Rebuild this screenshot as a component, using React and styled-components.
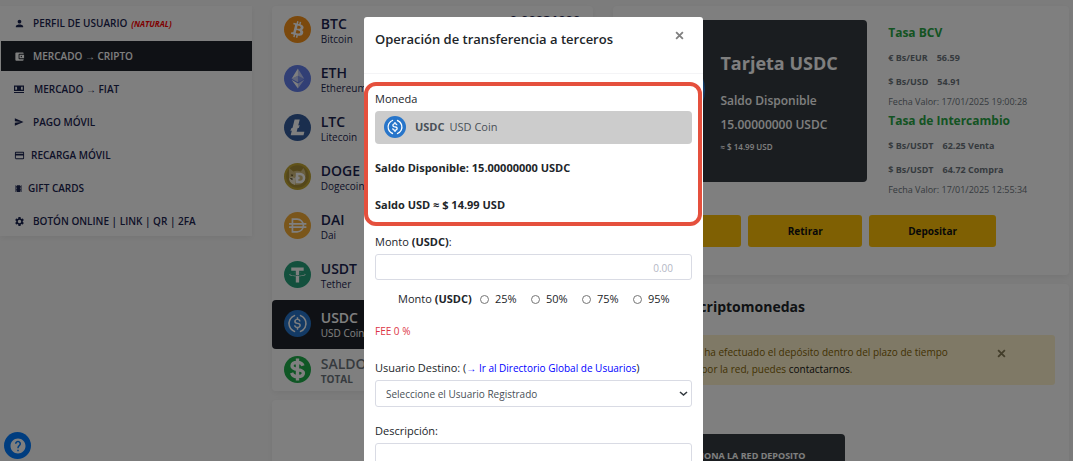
import React, { useState } from 'react';
import styled, { createGlobalStyle } from 'styled-components';
import {
  MdPerson,
  MdAccountBalanceWallet,
  MdSend,
  MdCreditCard,
  MdTheaters,
  MdSettings,
  MdHelp,
} from 'react-icons/md';

const GlobalStyle = createGlobalStyle`
  * {
    box-sizing: border-box;
  }

  body {
    margin: 0;
    background: #f9f9f9;
    color: #212529;
    font-family: "Open Sans", "Noto Sans", sans-serif;
    font-size: 11px;
    line-height: 16px;
    overflow: hidden;
  }

  button, input, select, textarea {
    font: inherit;
  }
`;

const Page = styled.div`
  display: grid;
  grid-template-columns: 252fr 322fr 456fr;
  gap: 20px;
  align-items: start;
  padding: 6px 4px 0 0;
`;

const Column = styled.div`
  display: flex;
  flex-direction: column;
  gap: 9px;
  min-width: 0;
`;

const Panel = styled.section`
  background: #fff;
  border-radius: 4px;
  box-shadow: 0 2px 6px rgba(0, 0, 0, 0.06);
`;

/* ---------- side menu ---------- */

const Menu = styled.nav`
  display: flex;
  flex-direction: column;
  gap: 3px;
  padding: 2px 0 0 1px;
  background: #fff;
  box-shadow: 0 2px 6px rgba(0, 0, 0, 0.06);
`;

const MenuLink = styled.a`
  display: flex;
  align-items: center;
  gap: ${(props) => props.$gap}px;
  height: 30px;
  padding-left: 13px;
  color: ${(props) => (props.$active ? '#fff' : '#1b2450')};
  background: ${(props) => (props.$active ? '#1f232b' : 'transparent')};
  font-size: 10px;
  font-weight: 600;
  text-decoration: none;
  white-space: nowrap;

  svg {
    flex: none;
  }
`;

const Tag = styled.em`
  margin-left: 4px;
  color: #f00;
  font-size: 8px;
  font-weight: 700;
`;

/* ---------- coin list ---------- */

const CoinRow = styled.a`
  display: flex;
  align-items: center;
  gap: 10px;
  height: ${(props) => (props.$total ? 42 : 49)}px;
  padding: 0 13px 2px 12px;
  border-radius: ${(props) => (props.$active ? 4 : 0)}px;
  background: ${(props) => (props.$active ? '#1f232b' : 'transparent')};
  color: ${(props) => (props.$active ? '#fff' : props.$total ? '#6c757d' : '#1b2450')};
  text-decoration: none;

  svg {
    flex: none;
  }
`;

const CoinText = styled.span`
  display: flex;
  flex: 1;
  flex-direction: column;
  padding-top: 2px;
  font-weight: ${(props) => (props.$total ? 700 : 400)};
  font-size: 10px;
  line-height: 14px;
`;

const CoinSymbol = styled.strong`
  font-size: 14px;
  font-weight: 600;
  line-height: 17px;
`;

const CoinAmount = styled.strong`
  align-self: flex-start;
  padding-top: 6px;
  font-size: 13px;
`;

/* ---------- card and rates ---------- */

const Summary = styled(Panel)`
  padding: 14px 16px 28px 14px;
`;

const SummaryTop = styled.div`
  display: grid;
  grid-template-columns: 240fr 186fr;
  align-items: start;
`;

const BalanceCard = styled.div`
  display: flex;
  gap: 15px;
  height: 162px;
  padding: 30px 6px 0;
  border-radius: 4px;
  background: #343a40;
  color: #fff;
  font-weight: 600;

  svg {
    flex: none;
    margin-top: 4px;
  }
`;

const CardTitle = styled.h2`
  margin: 0 0 13px;
  font-size: 18px;
  line-height: 26px;
`;

const CardLine = styled.p`
  margin: 0;
  font-size: 12px;
  line-height: 24px;
`;

const CardSmall = styled.p`
  margin: 2px 0 0;
  font-size: 8px;
  font-weight: 600;
`;

const Rates = styled.div`
  padding: 1px 0 0 21px;
`;

const RateTitle = styled.h3`
  margin: 0 0 1px;
  color: #28a745;
  font-size: 12px;
  font-weight: 700;
  line-height: 24px;
`;

const RateLine = styled.p`
  display: flex;
  gap: 9px;
  margin: 0;
  color: #6c757d;
  font-size: 9px;
  font-weight: 700;
  line-height: 24px;
`;

const RateDate = styled.p`
  margin: 0;
  color: #6c757d;
  font-size: 9px;
  line-height: 15px;
`;

const Actions = styled.div`
  display: grid;
  grid-template-columns: 114fr 114fr 127fr 50fr;
  gap: 7px;
  margin-top: 18px;
`;

const ActionButton = styled.button`
  height: 32px;
  border: 0;
  border-radius: 3px;
  background: #ffc107;
  color: #111;
  font-size: 10px;
  font-weight: 700;
`;

const DepositPanel = styled(Panel)`
  padding: 12px 14px 40px;
`;

const HistoryPanel = styled(Panel)`
  min-height: 120px;
`;

const DepositTitle = styled.h2`
  margin: 0 0 17px;
  font-size: 14px;
  font-weight: 700;
  line-height: 22px;
`;

const Alert = styled.div`
  display: flex;
  justify-content: space-between;
  height: 50px;
  padding: 9px 49px 0 18px;
  border-radius: 3px;
  background: #fff3cd;
  color: #856404;
  font-size: 10px;
  line-height: 17px;
  white-space: nowrap;

  p {
    margin: 0;
  }

  a {
    color: #111;
    text-decoration: none;
  }

  button {
    margin-top: 5px;
  }
`;

const CloseButton = styled.button`
  display: block;
  align-self: flex-start;
  padding: 0;
  border: 0;
  background: none;
  color: ${(props) => props.$color};
  line-height: 0;
`;

const NetworkButton = styled.button`
  display: block;
  width: 51%;
  height: 44px;
  margin-top: 49px;
  padding: 0 40px 0 0;
  border: 0;
  border-radius: 4px;
  background: #343a40;
  color: #fff;
  font-size: 9px;
  font-weight: 700;
  text-align: right;
  white-space: nowrap;
`;

const HelpButton = styled.button`
  position: fixed;
  left: 4px;
  bottom: 2px;
  display: grid;
  place-items: center;
  width: 27px;
  height: 27px;
  padding: 0;
  border: 0;
  border-radius: 50%;
  background: #007bff;
  color: #fff;
`;

/* ---------- modal ---------- */

const Backdrop = styled.div`
  position: fixed;
  inset: 0;
  overflow: hidden;
  padding: 17px 6px 0 0;
  background: rgba(0, 0, 0, 0.5);
`;

const Dialog = styled.div`
  max-width: 339px;
  margin: 0 auto;
  border-radius: 3px;
  background: #fff;
`;

const DialogHeader = styled.header`
  display: flex;
  justify-content: space-between;
  padding: 12px 19px 24px 11px;
  border-bottom: 1px solid #f4f4f6;

  h1 {
    margin: 0;
    font-size: 13px;
    font-weight: 600;
    line-height: 20px;
  }

  button {
    margin-top: 2px;
  }
`;

const Highlight = styled.div`
  margin: 8px 1px 0 0;
  padding: 5px 6px 9px 7px;
  border: 4px solid #e5503d;
  border-radius: 12px;
`;

const FormBody = styled.form`
  padding: 8px 11px;
`;

const Label = styled.label`
  display: block;
  line-height: 16px;
  margin-bottom: 4px;

  a {
    color: #00f;
    font-size: 10px;
    text-decoration: none;
  }
`;

const CoinField = styled.button`
  display: flex;
  align-items: center;
  gap: 5px;
  width: 100%;
  height: 33px;
  padding: 0 9px 2px;
  border: 0;
  border-radius: 4px;
  background: #ccc;
  color: #495057;

  svg {
    margin: 1px 4px 0 0;
  }
`;

const Balance = styled.p`
  margin: ${(props) => props.$top}px 0 0;
  font-weight: 700;
`;

const Field = styled.input`
  display: block;
  width: 100%;
  height: 26px;
  padding: 2px 18px 0;
  border: 1px solid #d9dbe4;
  border-radius: 3px;
  font-size: 10px;
  text-align: right;

  &::placeholder {
    color: #b4b7c5;
  }
`;

const Percents = styled.div`
  display: flex;
  align-items: center;
  margin-top: 11px;
  padding-left: 23px;
`;

const PercentLabel = styled.label`
  display: flex;
  align-items: center;
  gap: 6px;
  width: 51px;
`;

const Radio = styled.input`
  appearance: none;
  width: 9px;
  height: 9px;
  margin: 0;
  border: 1px solid #767676;
  border-radius: 50%;
  background: #fff;
`;

const PercentTitle = styled.span`
  width: 82px;
  white-space: nowrap;
`;

const Fee = styled.p`
  margin: 16px 0 21px;
  color: #dc3545;
  font-size: 10px;
`;

const SelectBox = styled.div`
  display: grid;
  align-items: center;
  margin-bottom: 16px;

  select, svg {
    grid-area: 1 / 1;
  }

  svg {
    justify-self: end;
    margin-right: 4px;
    pointer-events: none;
  }
`;

const Select = styled.select`
  appearance: none;
  width: 100%;
  height: 27px;
  padding: 0 10px;
  border: 1px solid #d9dbe4;
  border-radius: 3px;
  background: #fff;
  color: #495057;
  font-size: 10px;
`;

const Area = styled.textarea`
  display: block;
  width: 100%;
  height: 60px;
  border: 1px solid #d9dbe4;
  border-radius: 3px;
  resize: none;
`;

/* ---------- drawings ---------- */

const coinArt = {
  BTC: (
    <>
      <circle cx="16" cy="16" r="16" fill="#f7931a" />
      <path
        fill="#fff"
        d="M23.189 14.02c.314-2.096-1.283-3.223-3.465-3.975l.708-2.84-1.728-.43-.69 2.765c-.454-.114-.92-.22-1.385-.326l.695-2.783L15.596 6l-.708 2.839c-.376-.086-.746-.17-1.104-.26l.002-.009-2.384-.595-.46 1.846s1.283.294 1.256.312c.7.175.826.638.805 1.006l-.806 3.235c.048.012.11.03.18.057l-.183-.045-1.13 4.532c-.086.212-.303.531-.793.41.018.025-1.256-.313-1.256-.313l-.858 1.978 2.25.561c.418.105.828.215 1.231.318l-.715 2.872 1.727.43.708-2.84c.472.127.93.245 1.378.357l-.706 2.828 1.728.43.715-2.866c2.948.558 5.164.333 6.097-2.333.752-2.146-.037-3.385-1.588-4.192 1.13-.26 1.98-1.003 2.207-2.538zm-3.95 5.538c-.533 2.147-4.148.986-5.32.695l.95-3.805c1.172.293 4.929.872 4.37 3.11zm.535-5.569c-.487 1.953-3.495.96-4.47.717l.86-3.45c.975.243 4.118.696 3.61 2.733z"
      />
    </>
  ),
  ETH: (
    <>
      <circle cx="16" cy="16" r="16" fill="#627eea" />
      <g fill="#fff">
        <path fillOpacity=".6" d="M16.498 4v8.87l7.497 3.35z" />
        <path d="M16.498 4L9 16.22l7.498-3.35z" />
        <path fillOpacity=".6" d="M16.498 21.968v6.027L24 17.616z" />
        <path d="M16.498 27.995v-6.028L9 17.616z" />
        <path fillOpacity=".2" d="M16.498 20.573l7.497-4.353-7.497-3.348z" />
        <path fillOpacity=".6" d="M9 16.22l7.498 4.353v-7.701z" />
      </g>
    </>
  ),
  LTC: (
    <>
      <circle cx="16" cy="16" r="16" fill="#345d9d" />
      <path
        fill="#fff"
        transform="translate(-3 -3) scale(1.18)"
        d="M10.427 19.214L9 19.768l.688-2.759 1.444-.58L13.213 8h5.129l-1.519 6.196 1.41-.571-.68 2.75-1.427.571-.848 3.483H23L22.127 24H9.252z"
      />
    </>
  ),
  DOGE: (
    <>
      <circle cx="16" cy="16" r="16" fill="#c2a633" />
      <circle cx="16" cy="16" r="13.4" fill="#a98f36" />
      <path fill="#d3bd7c" d="M6 6l5 4c3-1 6-1 9 0l3-4c3 5 3 8 2 13-2 5-5 7-10 7-6-1-9-5-9-10z" />
      <path fill="#f3e9cf" d="M6 18c3-2 6-1 8 1l-1 7c-4-1-7-4-7-8z" />
      <path fill="#4a3c17" d="M8 13.500l3 .5-1.500 2zM14.500 13l2.500.5-1.500 1.500zM6.500 18h3.500v2.500z" />
      <path
        fill="none"
        stroke="#fff"
        strokeWidth="3"
        d="M15.500 13h3.500a4.500 4.500 0 0 1 0 9.500h-3.500zM13.500 17.700h5"
      />
    </>
  ),
  DAI: (
    <>
      <circle cx="16" cy="16" r="16" fill="#f5ac37" />
      <path
        fill="none"
        stroke="#fff"
        strokeWidth="2"
        d="M10 8.500h5.500a7.500 7.500 0 0 1 0 15H10zM6 14h20.500M6 18h20.500"
      />
    </>
  ),
  USDT: (
    <>
      <circle cx="16" cy="16" r="16" fill="#26a17b" />
      <path
        fill="#fff"
        d="M17.922 17.383v-.002c-.11.008-.677.042-1.942.042-1.01 0-1.721-.03-1.971-.042v.003c-3.888-.171-6.79-.848-6.79-1.658 0-.809 2.902-1.486 6.79-1.66v2.644c.254.018.982.061 1.988.061 1.207 0 1.812-.05 1.925-.06v-2.643c3.88.173 6.775.85 6.775 1.658 0 .81-2.895 1.485-6.775 1.657m0-3.59v-2.366h5.414V7.819H8.595v3.608h5.414v2.365c-4.4.202-7.709 1.074-7.709 2.118 0 1.044 3.309 1.915 7.709 2.118v7.582h3.913v-7.584c4.393-.202 7.694-1.073 7.694-2.116 0-1.043-3.301-1.914-7.694-2.117"
      />
    </>
  ),
  USDC: (
    <>
      <circle cx="16" cy="16" r="16" fill="#2775ca" />
      <path
        fill="#fff"
        d="M20.022 18.124c0-2.124-1.28-2.852-3.84-3.156-1.828-.243-2.193-.728-2.193-1.578 0-.85.61-1.396 1.828-1.396 1.097 0 1.707.364 2.011 1.275a.458.458 0 00.427.303h.975a.416.416 0 00.427-.425v-.06a3.04 3.04 0 00-2.743-2.489V9.142c0-.243-.183-.425-.487-.486h-.915c-.243 0-.426.182-.487.486v1.396c-1.829.242-2.986 1.456-2.986 2.974 0 2.002 1.218 2.791 3.778 3.095 1.707.303 2.255.668 2.255 1.639 0 .97-.853 1.638-2.011 1.638-1.585 0-2.133-.667-2.316-1.578-.06-.242-.244-.364-.427-.364h-1.036a.416.416 0 00-.426.425v.06c.243 1.518 1.219 2.61 3.23 2.914v1.457c0 .242.183.425.487.485h.915c.243 0 .426-.182.487-.485V21.34c1.829-.303 3.047-1.578 3.047-3.217z"
      />
      <path
        fill="#fff"
        d="M12.892 24.497c-4.754-1.7-7.192-6.98-5.424-11.653.914-2.55 2.925-4.491 5.424-5.402.244-.121.365-.303.365-.607v-.85c0-.242-.121-.424-.365-.485-.061 0-.183 0-.244.06a10.895 10.895 0 00-7.13 13.717c1.096 3.4 3.717 6.01 7.13 7.102.244.121.488 0 .548-.243.061-.06.061-.122.061-.243v-.85c0-.182-.182-.424-.365-.546zm6.46-18.936c-.244-.122-.488 0-.548.242-.061.061-.061.122-.061.243v.85c0 .243.182.485.365.607 4.754 1.7 7.192 6.98 5.424 11.653-.914 2.55-2.925 4.491-5.424 5.402-.244.121-.365.303-.365.607v.85c0 .242.121.424.365.485.061 0 .183 0 .244-.06a10.895 10.895 0 007.13-13.717c-1.096-3.46-3.778-6.07-7.13-7.162z"
      />
    </>
  ),
  TOTAL: (
    <>
      <circle cx="16" cy="16" r="16" fill="#1fae4b" />
      <path
        fill="none"
        stroke="#fff"
        strokeWidth="4"
        d="M22.500 11.500c-1-3-3.500-4-6.500-4-4 0-6.500 1.500-6.500 4.300 0 6 13.500 2.600 13.500 8.400 0 2.800-3 4.300-7 4.300-3.500 0-6-1.500-7-4.500M16 3v26"
      />
    </>
  ),
};

const CoinIcon = ({ coin, size }) => (
  <svg width={size} height={size} viewBox="0 0 32 32" aria-hidden="true">
    {coinArt[coin]}
  </svg>
);

const CashIcon = () => (
  <svg width="10" height="10" viewBox="0 0 20 20" aria-hidden="true">
    <path
      fill="currentColor"
      fillRule="evenodd"
      d="M0 3h20v11H0zM2.500 5.500v6h3c1-2 1-4 0-6zM17.500 5.500v6h-3c-1-2-1-4 0-6z"
    />
    <path fill="currentColor" d="M0 16h20v2H0z" />
  </svg>
);

const Cross = ({ size }) => (
  <svg width={size} height={size} viewBox="0 0 8 8" aria-hidden="true">
    <path d="M1 1l6 6M7 1L1 7" stroke="currentColor" strokeWidth="1.600" />
  </svg>
);

/* ---------- data ---------- */

const menu = [
  { label: 'PERFIL DE USUARIO', icon: <MdPerson size={11} />, gap: 8, tag: '(NATURAL)' },
  { label: 'MERCADO → CRIPTO', icon: <MdAccountBalanceWallet size={11} />, gap: 8, active: true },
  { label: 'MERCADO → FIAT', icon: <CashIcon />, gap: 10 },
  { label: 'PAGO MÓVIL', icon: <MdSend size={10} />, gap: 9 },
  { label: 'RECARGA MÓVIL', icon: <MdCreditCard size={11} />, gap: 6 },
  { label: 'GIFT CARDS', icon: <MdTheaters size={9} />, gap: 5 },
  { label: 'BOTÓN ONLINE | LINK | QR | 2FA', icon: <MdSettings size={11} />, gap: 8 },
];

const coins = [
  { symbol: 'BTC', name: 'Bitcoin', amount: '0.00031000' },
  { symbol: 'ETH', name: 'Ethereum' },
  { symbol: 'LTC', name: 'Litecoin' },
  { symbol: 'DOGE', name: 'Dogecoin' },
  { symbol: 'DAI', name: 'Dai' },
  { symbol: 'USDT', name: 'Tether' },
  { symbol: 'USDC', name: 'USD Coin', active: true },
];

const percents = ['25%', '50%', '75%', '95%'];

const TransferDialog = () => {
  const [percent, setPercent] = useState(null);

  return (
    <Dialog role="dialog" aria-labelledby="dialog-title">
      <DialogHeader>
        <h1 id="dialog-title">Operación de transferencia a terceros</h1>
        <CloseButton type="button" aria-label="Cerrar" $color="#7f7f7f">
          <Cross size={9} />
        </CloseButton>
      </DialogHeader>
      <Highlight>
        <Label htmlFor="coin">Moneda</Label>
        <CoinField id="coin" type="button">
          <CoinIcon coin="USDC" size={22} />
          <strong>USDC</strong>
          <span>USD Coin</span>
        </CoinField>
        <Balance $top={16}>Saldo Disponible: 15.00000000 USDC</Balance>
        <Balance $top={21}>Saldo USD ≈ $ 14.99 USD</Balance>
      </Highlight>
      <FormBody>
        <Label htmlFor="amount">
          Monto <strong>(USDC)</strong>:
        </Label>
        <Field id="amount" placeholder="0.00" />
        <Percents role="radiogroup">
          <PercentTitle>
            Monto <strong>(USDC)</strong>
          </PercentTitle>
          {percents.map((value) => (
            <PercentLabel key={value}>
              <Radio
                type="radio"
                name="percent"
                checked={percent === value}
                onChange={() => setPercent(value)}
              />
              {value}
            </PercentLabel>
          ))}
        </Percents>
        <Fee>FEE 0 %</Fee>
        <Label htmlFor="target">
          Usuario Destino: (<a href="#directorio">→ Ir al Directorio Global de Usuarios</a>)
        </Label>
        <SelectBox>
          <Select id="target">
            <option>Seleccione el Usuario Registrado</option>
          </Select>
          <svg width="9" height="9" viewBox="0 0 9 9" aria-hidden="true">
            <path d="M1 3l3.500 3L8 3" fill="none" stroke="#343a40" strokeWidth="1.600" />
          </svg>
        </SelectBox>
        <Label htmlFor="description">Descripción:</Label>
        <Area id="description" />
      </FormBody>
    </Dialog>
  );
};

const App = () => (
  <>
    <GlobalStyle />
    <Page>
      <Menu>
        {menu.map((item) => (
          <MenuLink key={item.label} href="#" $gap={item.gap} $active={item.active}>
            {item.icon}
            <span>
              {item.label}
              {item.tag && <Tag>{item.tag}</Tag>}
            </span>
          </MenuLink>
        ))}
      </Menu>

      <Column>
        <Panel>
          {coins.map((coin) => (
            <CoinRow key={coin.symbol} href="#" $active={coin.active}>
              <CoinIcon coin={coin.symbol} size={27} />
              <CoinText>
                <CoinSymbol>{coin.symbol}</CoinSymbol>
                {coin.name}
              </CoinText>
              {coin.amount && <CoinAmount>{coin.amount}</CoinAmount>}
            </CoinRow>
          ))}
          <CoinRow as="div" $total>
            <CoinIcon coin="TOTAL" size={27} />
            <CoinText $total>
              <CoinSymbol>SALDO</CoinSymbol>
              TOTAL
            </CoinText>
          </CoinRow>
        </Panel>
        <HistoryPanel />
      </Column>

      <Column>
        <Summary>
          <SummaryTop>
            <BalanceCard>
              <CoinIcon coin="USDC" size={72} />
              <div>
                <CardTitle>Tarjeta USDC</CardTitle>
                <CardLine>Saldo Disponible</CardLine>
                <CardLine>15.00000000 USDC</CardLine>
                <CardSmall>≈ $ 14.99 USD</CardSmall>
              </div>
            </BalanceCard>
            <Rates>
              <RateTitle>Tasa BCV</RateTitle>
              <RateLine><span>€ Bs/EUR</span><span>56.59</span></RateLine>
              <RateLine><span>$ Bs/USD</span><span>54.91</span></RateLine>
              <RateDate>Fecha Valor: 17/01/2025 19:00:28</RateDate>
              <RateTitle>Tasa de Intercambio</RateTitle>
              <RateLine><span>$ Bs/USDT</span><span>62.25 Venta</span></RateLine>
              <RateLine><span>$ Bs/USDT</span><span>64.72 Compra</span></RateLine>
              <RateDate>Fecha Valor: 17/01/2025 12:55:34</RateDate>
            </Rates>
          </SummaryTop>
          <Actions>
            <ActionButton type="button">Enviar</ActionButton>
            <ActionButton type="button">Retirar</ActionButton>
            <ActionButton type="button">Depositar</ActionButton>
          </Actions>
        </Summary>
        <DepositPanel>
          <DepositTitle>Depositar criptomonedas</DepositTitle>
          <Alert>
            <p>
              Si aún no se ha efectuado el depósito dentro del plazo de tiempo
              <br />
              establecido por la red, puedes <a href="#contacto">contactarnos</a>.
            </p>
            <CloseButton type="button" aria-label="Cerrar" $color="#857a54">
              <Cross size={9} />
            </CloseButton>
          </Alert>
          <NetworkButton type="button">SELECCIONA LA RED DEPOSITO</NetworkButton>
        </DepositPanel>
      </Column>
    </Page>
    <HelpButton type="button" aria-label="Ayuda">
      <MdHelp size={18} />
    </HelpButton>
    <Backdrop>
      <TransferDialog />
    </Backdrop>
  </>
);

export default App;
